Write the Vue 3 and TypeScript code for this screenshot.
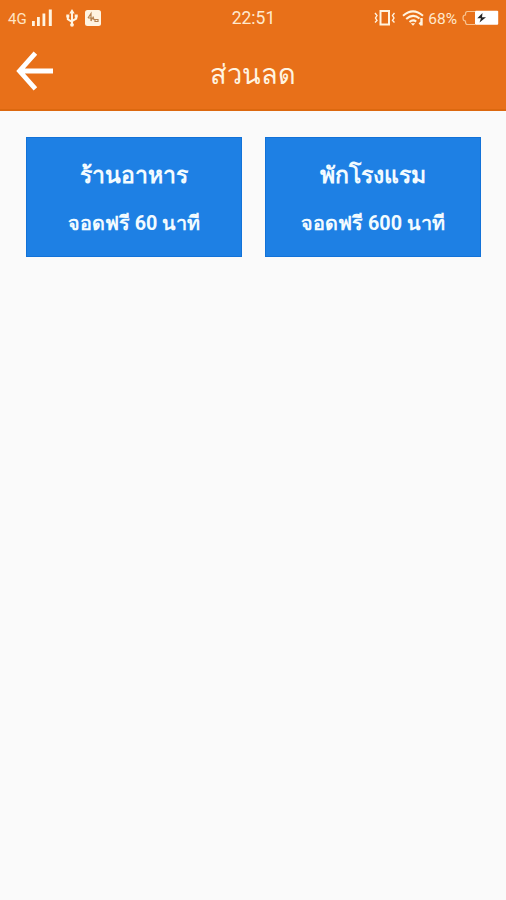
<script setup lang="ts">
interface Discount {
  name: string
  detail: string
}

const discounts: Discount[] = [
  { name: 'ร้านอาหาร', detail: 'จอดฟรี 60 นาที' },
  { name: 'พักโรงแรม', detail: 'จอดฟรี 600 นาที' },
]
</script>

<template>
  <div class="screen">
    <header class="header">
      <div class="status">
        <div class="left">
          <span class="network">4G</span>
          <svg class="signal" width="22" height="18" viewBox="0 0 22 18" fill="currentColor">
            <rect x="1" y="12" width="2.8" height="5" />
            <rect x="6" y="8" width="2.8" height="9" />
            <rect x="11.5" y="4.5" width="2.8" height="12.5" />
            <rect x="17.8" y=".5" width="3" height="16.5" />
          </svg>
          <svg class="usb" width="14" height="18" viewBox="0 0 14 18">
            <path d="M7 3v12M2.8 7v3.2L7 13M11.2 6.5v3.2L7 12" fill="none" stroke="currentColor" stroke-width="2" />
            <path d="M7 0 9.7 4.6H4.3zM1.3 5.5h3v3h-3zM9.7 5.5h3v3h-3z" fill="currentColor" />
            <circle cx="7" cy="15.8" r="1.9" fill="currentColor" />
          </svg>
          <svg class="app" width="16" height="16" viewBox="0 0 16 16">
            <rect width="16" height="16" rx="2.5" fill="currentColor" />
            <path d="m3 8 3-4.5V11M3 8h4.5L6 11M8 6.5 9 10M10 9.5h3v2h-3z" fill="none" stroke="#b78350" stroke-width="1.2" />
          </svg>
        </div>
        <span class="clock">22:51</span>
        <div class="right">
          <svg width="22" height="18" viewBox="0 0 22 18" fill="none" stroke="currentColor">
            <rect x="7.5" y="2" width="8.5" height="13.5" stroke-width="2" />
            <path d="m2 4 2 2.5L2.5 9 4 11.5l-2 2M21.5 4l-2 2.5L21 9l-1.5 2.5 2 2" stroke-width="1.4" />
          </svg>
          <svg class="wifi" width="23" height="18" viewBox="0 0 23 18" fill="none" stroke="currentColor">
            <path d="M1 6.8Q11 -2 21 6.8M4.2 10Q11 4 17.5 9.6M7.5 13Q11 10 14.2 12.6" stroke-width="2" />
            <path d="m8.8 14.3 4.4 0-2.2 2.5z" fill="currentColor" stroke="none" />
            <path d="M19.5 9v7.5M17.5 13.5l2 2.5" stroke-width="2.4" />
          </svg>
          <span class="percent">68%</span>
          <svg class="battery" width="37" height="16" viewBox="0 0 37 16">
            <path d="M13 1.5H5.5Q3.5 1.5 3.5 4v1Q1 5 1 8t2.5 3v1q0 2.5 2 2.5H13" fill="none" stroke="#f8c38f" stroke-width="1.2" />
            <rect x="13" y=".8" width="23.2" height="14" rx="1" fill="#fff" />
            <path d="m20.5 3-5.2 5.2h3.7L17.5 12.5 24 7.2h-4z" fill="#252525" />
          </svg>
        </div>
      </div>
      <div class="toolbar">
        <button class="back" type="button" aria-label="กลับ">
          <svg width="38" height="42" viewBox="0 0 38 42" fill="none" stroke="currentColor" stroke-width="4.8">
            <path d="M19.4 3.2 3.5 21l15.9 17.8M4.2 21H37" />
          </svg>
        </button>
        <h1>ส่วนลด</h1>
      </div>
    </header>
    <main class="cards">
      <article v-for="item in discounts" :key="item.name" class="card">
        <h2>{{ item.name }}</h2>
        <p>{{ item.detail }}</p>
      </article>
    </main>
  </div>
</template>

<style>
body {
  margin: 0;
  background: #fafafa;
}
</style>

<style scoped>
.screen {
  min-height: 900px;
  background: #fafafa;
  font-family: Roboto, sans-serif;
}
.header {
  box-sizing: border-box;
  height: 111px;
  background: #e87019;
  border-bottom: 2px solid #dc680f;
  color: #fff4e1;
}
.status {
  display: grid;
  grid-template-columns: 1fr auto 1fr;
  align-items: center;
  height: 36px;
  padding: 0 7px 0 8px;
}
.left,
.right {
  display: flex;
  align-items: center;
}
.right {
  justify-content: flex-end;
}
.network {
  width: 23px;
  font-size: 15px;
  line-height: 18px;
  padding-top: 2px;
  box-sizing: border-box;
  color: #ffe5c4;
}
.usb {
  margin-left: 12px;
}
.app {
  margin-left: 6px;
}
.clock {
  font-size: 17.5px;
  color: #ffe9ce;
}
.wifi {
  margin-left: 7px;
}
.percent {
  margin: 1px 5px 0 3px;
  font-size: 15.5px;
  color: #ffe9ce;
}
.toolbar {
  display: grid;
  grid-template-columns: 54px 1fr 54px;
  align-items: center;
  height: 73px;
}
.back {
  display: flex;
  padding: 0 0 3px 16px;
  border: 0;
  background: none;
  color: #fff;
}
h1 {
  margin: 4px 0 0;
  font-size: 27.2px;
  line-height: 40px;
  font-weight: 400;
  text-align: center;
}
.cards {
  display: grid;
  grid-template-columns: 1fr 1fr;
  gap: 23px;
  padding: 26px 25px 0 26px;
}
.card {
  box-sizing: border-box;
  height: 120px;
  padding-top: 20px;
  border: 1px solid #1272d8;
  background: #1e80e4;
  color: #f2fbff;
  text-align: center;
}
h2 {
  margin: 0;
  font-size: 23px;
  line-height: 36px;
  font-weight: 700;
}
p {
  margin: 15px 0 0;
  font-size: 19.8px;
  line-height: 30px;
  font-weight: 700;
}
</style>
